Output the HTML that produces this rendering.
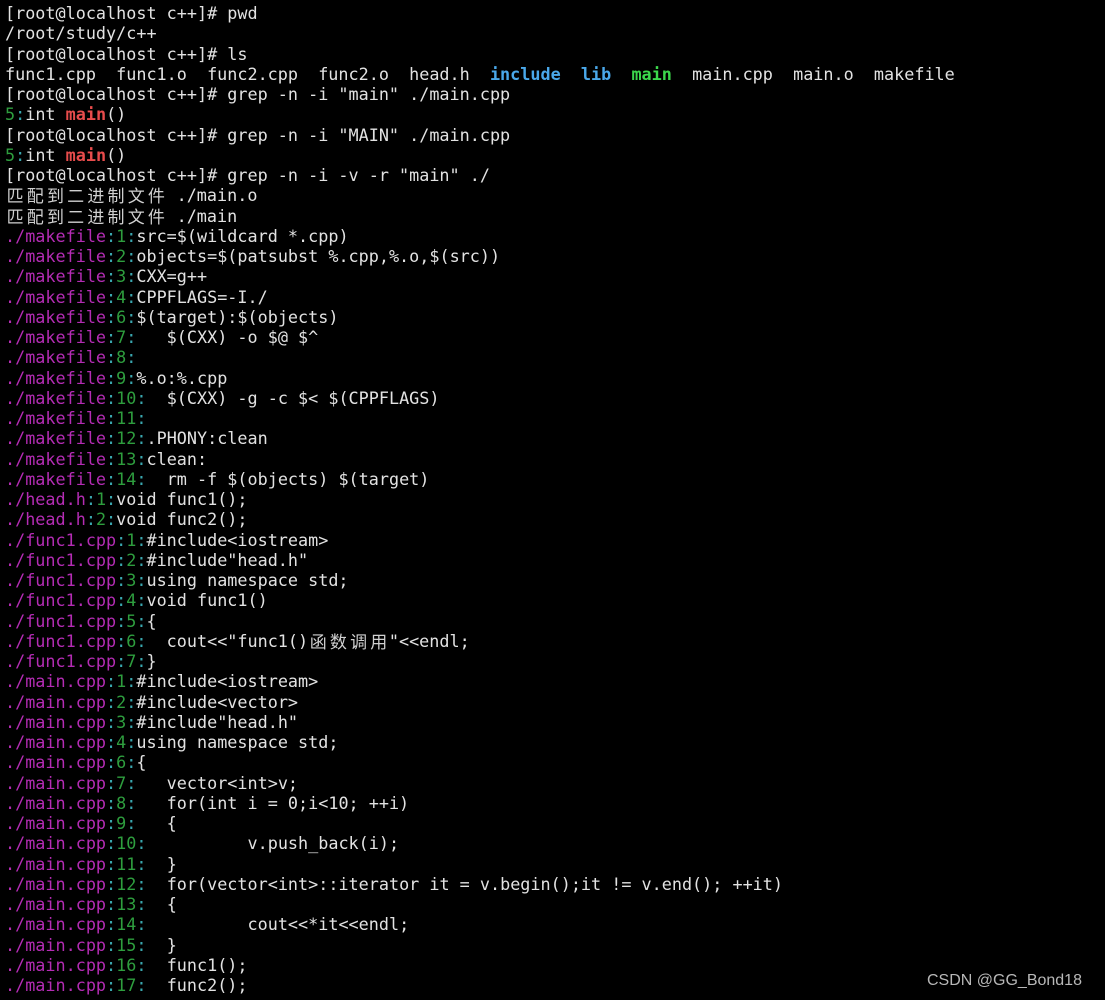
<!DOCTYPE html>
<html><head><meta charset="utf-8"><style>
html,body{margin:0;padding:0;background:#000;}
body{width:1105px;height:1000px;overflow:hidden;position:relative;}
pre{margin:0;padding:3px 0 0 5px;font-family:"DejaVu Sans Mono","Liberation Mono","Noto Sans CJK SC",monospace;font-size:16.8px;line-height:20.25px;color:#e2e2e2;}
.p{color:#b42cb4}.g{color:#2e9e3e}.r{color:#e84c4c;font-weight:bold}.b{color:#4aa8ea;font-weight:bold}.gb{color:#3cd84c;font-weight:bold}
.k{color:#3aa8b0}
.c{display:inline-block;width:20.2px;height:20.25px;line-height:20.25px;vertical-align:top;font-family:"Noto Sans CJK SC",sans-serif;font-size:17px;text-align:center;color:#d0d0d0;overflow:hidden}
.wm{position:absolute;left:927px;top:972px;font-family:"Liberation Sans",sans-serif;font-size:16px;color:#b8b8b8;}
</style></head><body><pre>[root@localhost c++]# pwd
/root/study/c++
[root@localhost c++]# ls
func1.cpp  func1.o  func2.cpp  func2.o  head.h  <span class="b">include</span>  <span class="b">lib</span>  <span class="gb">main</span>  main.cpp  main.o  makefile
[root@localhost c++]# grep -n -i "main" ./main.cpp
<span class="g">5</span><span class="k">:</span>int <span class="r">main</span>()
[root@localhost c++]# grep -n -i "MAIN" ./main.cpp
<span class="g">5</span><span class="k">:</span>int <span class="r">main</span>()
[root@localhost c++]# grep -n -i -v -r "main" ./
<span class="c">匹</span><span class="c">配</span><span class="c">到</span><span class="c">二</span><span class="c">进</span><span class="c">制</span><span class="c">文</span><span class="c">件</span> ./main.o
<span class="c">匹</span><span class="c">配</span><span class="c">到</span><span class="c">二</span><span class="c">进</span><span class="c">制</span><span class="c">文</span><span class="c">件</span> ./main
<span class="p">./makefile</span><span class="k">:</span><span class="g">1</span><span class="k">:</span>src=$(wildcard *.cpp)
<span class="p">./makefile</span><span class="k">:</span><span class="g">2</span><span class="k">:</span>objects=$(patsubst %.cpp,%.o,$(src))
<span class="p">./makefile</span><span class="k">:</span><span class="g">3</span><span class="k">:</span>CXX=g++
<span class="p">./makefile</span><span class="k">:</span><span class="g">4</span><span class="k">:</span>CPPFLAGS=-I./
<span class="p">./makefile</span><span class="k">:</span><span class="g">6</span><span class="k">:</span>$(target):$(objects)
<span class="p">./makefile</span><span class="k">:</span><span class="g">7</span><span class="k">:</span>   $(CXX) -o $@ $^
<span class="p">./makefile</span><span class="k">:</span><span class="g">8</span><span class="k">:</span>
<span class="p">./makefile</span><span class="k">:</span><span class="g">9</span><span class="k">:</span>%.o:%.cpp
<span class="p">./makefile</span><span class="k">:</span><span class="g">10</span><span class="k">:</span>  $(CXX) -g -c $&lt; $(CPPFLAGS)
<span class="p">./makefile</span><span class="k">:</span><span class="g">11</span><span class="k">:</span>
<span class="p">./makefile</span><span class="k">:</span><span class="g">12</span><span class="k">:</span>.PHONY:clean
<span class="p">./makefile</span><span class="k">:</span><span class="g">13</span><span class="k">:</span>clean:
<span class="p">./makefile</span><span class="k">:</span><span class="g">14</span><span class="k">:</span>  rm -f $(objects) $(target)
<span class="p">./head.h</span><span class="k">:</span><span class="g">1</span><span class="k">:</span>void func1();
<span class="p">./head.h</span><span class="k">:</span><span class="g">2</span><span class="k">:</span>void func2();
<span class="p">./func1.cpp</span><span class="k">:</span><span class="g">1</span><span class="k">:</span>#include&lt;iostream&gt;
<span class="p">./func1.cpp</span><span class="k">:</span><span class="g">2</span><span class="k">:</span>#include"head.h"
<span class="p">./func1.cpp</span><span class="k">:</span><span class="g">3</span><span class="k">:</span>using namespace std;
<span class="p">./func1.cpp</span><span class="k">:</span><span class="g">4</span><span class="k">:</span>void func1()
<span class="p">./func1.cpp</span><span class="k">:</span><span class="g">5</span><span class="k">:</span>{
<span class="p">./func1.cpp</span><span class="k">:</span><span class="g">6</span><span class="k">:</span>  cout&lt;&lt;"func1()<span class="c">函</span><span class="c">数</span><span class="c">调</span><span class="c">用</span>"&lt;&lt;endl;
<span class="p">./func1.cpp</span><span class="k">:</span><span class="g">7</span><span class="k">:</span>}
<span class="p">./main.cpp</span><span class="k">:</span><span class="g">1</span><span class="k">:</span>#include&lt;iostream&gt;
<span class="p">./main.cpp</span><span class="k">:</span><span class="g">2</span><span class="k">:</span>#include&lt;vector&gt;
<span class="p">./main.cpp</span><span class="k">:</span><span class="g">3</span><span class="k">:</span>#include"head.h"
<span class="p">./main.cpp</span><span class="k">:</span><span class="g">4</span><span class="k">:</span>using namespace std;
<span class="p">./main.cpp</span><span class="k">:</span><span class="g">6</span><span class="k">:</span>{
<span class="p">./main.cpp</span><span class="k">:</span><span class="g">7</span><span class="k">:</span>   vector&lt;int&gt;v;
<span class="p">./main.cpp</span><span class="k">:</span><span class="g">8</span><span class="k">:</span>   for(int i = 0;i&lt;10; ++i)
<span class="p">./main.cpp</span><span class="k">:</span><span class="g">9</span><span class="k">:</span>   {
<span class="p">./main.cpp</span><span class="k">:</span><span class="g">10</span><span class="k">:</span>          v.push_back(i);
<span class="p">./main.cpp</span><span class="k">:</span><span class="g">11</span><span class="k">:</span>  }
<span class="p">./main.cpp</span><span class="k">:</span><span class="g">12</span><span class="k">:</span>  for(vector&lt;int&gt;::iterator it = v.begin();it != v.end(); ++it)
<span class="p">./main.cpp</span><span class="k">:</span><span class="g">13</span><span class="k">:</span>  {
<span class="p">./main.cpp</span><span class="k">:</span><span class="g">14</span><span class="k">:</span>          cout&lt;&lt;*it&lt;&lt;endl;
<span class="p">./main.cpp</span><span class="k">:</span><span class="g">15</span><span class="k">:</span>  }
<span class="p">./main.cpp</span><span class="k">:</span><span class="g">16</span><span class="k">:</span>  func1();
<span class="p">./main.cpp</span><span class="k">:</span><span class="g">17</span><span class="k">:</span>  func2();
</pre><div class="wm">CSDN @GG_Bond18</div></body></html>
